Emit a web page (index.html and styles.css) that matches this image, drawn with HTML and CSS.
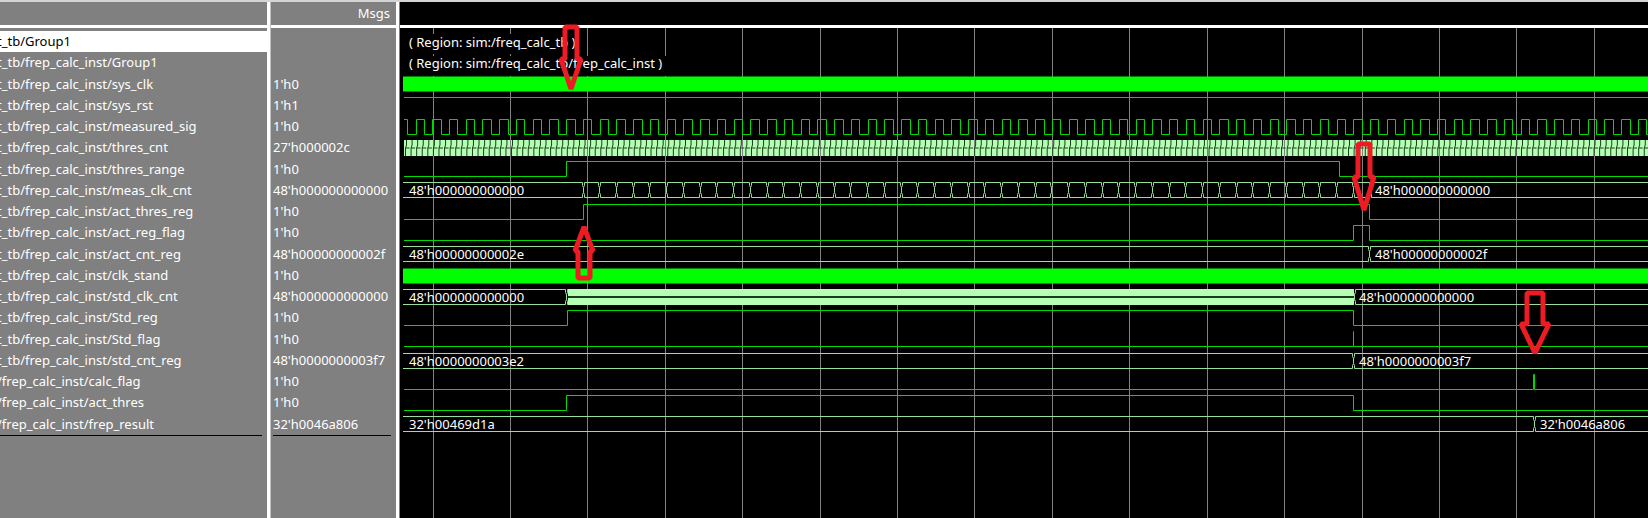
FILE: index.html
```html
<!DOCTYPE html>
<html lang="en">
<head>
    <meta charset="UTF-8">
    <title>Wave</title>
    <link rel="stylesheet" href="styles.css">
</head>
<body>
    <div class="wave-window">
        <div class="pane names">
            <div class="pane-head"></div>
            <ul class="rows">
                <li class="selected">t_tb/Group1</li>
                <li>t_tb/frep_calc_inst/Group1</li>
                <li>t_tb/frep_calc_inst/sys_clk</li>
                <li>t_tb/frep_calc_inst/sys_rst</li>
                <li>t_tb/frep_calc_inst/measured_sig</li>
                <li>t_tb/frep_calc_inst/thres_cnt</li>
                <li>t_tb/frep_calc_inst/thres_range</li>
                <li>t_tb/frep_calc_inst/meas_clk_cnt</li>
                <li>t_tb/frep_calc_inst/act_thres_reg</li>
                <li>t_tb/frep_calc_inst/act_reg_flag</li>
                <li>t_tb/frep_calc_inst/act_cnt_reg</li>
                <li>t_tb/frep_calc_inst/clk_stand</li>
                <li>t_tb/frep_calc_inst/std_clk_cnt</li>
                <li>t_tb/frep_calc_inst/Std_reg</li>
                <li>t_tb/frep_calc_inst/Std_flag</li>
                <li>t_tb/frep_calc_inst/std_cnt_reg</li>
                <li>/frep_calc_inst/calc_flag</li>
                <li>/frep_calc_inst/act_thres</li>
                <li>/frep_calc_inst/frep_result</li>
            </ul>
        </div>
        <div class="pane values">
            <div class="pane-head">Msgs</div>
            <ul class="rows">
                <li></li>
                <li></li>
                <li>1'h0</li>
                <li>1'h1</li>
                <li>1'h0</li>
                <li>27'h000002c</li>
                <li>1'h0</li>
                <li>48'h000000000000</li>
                <li>1'h0</li>
                <li>1'h0</li>
                <li>48'h00000000002f</li>
                <li>1'h0</li>
                <li>48'h000000000000</li>
                <li>1'h0</li>
                <li>1'h0</li>
                <li>48'h0000000003f7</li>
                <li>1'h0</li>
                <li>1'h0</li>
                <li>32'h0046a806</li>
            </ul>
        </div>
        <div class="pane waves">
            <div class="pane-head"></div>
            <svg class="plot" id="plot"></svg>
        </div>
    </div>
    <script src="wave.js"></script>
</body>
</html>
```

FILE: styles.css
```css
body {
    margin: 0;
    background-color: #000;
    font-family: "Noto Sans", "DejaVu Sans Condensed", sans-serif;
    font-size: 13px;
    color: #fff;
}
.wave-window {
    display: flex;
    box-sizing: border-box;
    height: 100vh;
    border-top: 2px solid #d4d4d4;
    overflow: hidden;
}
.pane {
    position: relative;
    box-sizing: border-box;
    flex: none;
    background-color: #808080;
    overflow: hidden;
}
.names {
    width: 270px;
    border-right: 3px solid #fff;
}
.values {
    width: 129px;
    border-left: 1px solid #c0c0c0;
    border-right: 3px solid #fff;
}
.waves {
    flex: 1;
    background-color: #000;
    border-left: 1px solid #808080;
}
.pane-head {
    box-sizing: border-box;
    height: 26px;
    padding-right: 6px;
    border-bottom: 3px solid #fff;
    line-height: 23px;
    text-align: right;
}
.rows {
    display: grid;
    grid-template-rows: repeat(19, 1fr);
    height: 404px;
    margin: 3px 5px 0 0;
    padding: 0;
    border-bottom: 1px solid #000;
    list-style: none;
}
.rows li {
    line-height: 20px;
    min-height: 0;
    white-space: pre;
}
.names li {
    text-indent: -3px;
}
.names .selected {
    margin-right: -5px;
    background-color: #fff;
    color: #000;
}
.values .rows {
    margin-left: 2px;
}
.plot {
    position: absolute;
    top: 0;
    left: 0;
    width: 100%;
    height: 100%;
}
.plot text {
    fill: #fff;
}
.label-back {
    fill: #000;
}
.grid {
    fill: none;
    stroke: #808080;
}
.logic {
    fill: none;
    stroke: #00d800;
}
.bus {
    fill: none;
    stroke: #98e098;
}
.solid {
    fill: #0f0;
}
.dense {
    fill: #b4ffb4;
}
.notch {
    fill: none;
    stroke: #1c3c1c;
}
.gap {
    fill: #1c3c1c;
}
.arrow {
    fill: none;
    stroke: #ed1c24;
    stroke-width: 5;
    stroke-linejoin: bevel;
}
```

FILE: wave.js
```js
const plot = document.getElementById('plot');
const rowHeight = 404 / 19;
const start = 3;
const end = 4000;

function add(tag, attrs, text) {
    const el = document.createElementNS('http://www.w3.org/2000/svg', tag);
    for (const key in attrs) el.setAttribute(key, attrs[key]);
    if (text) el.textContent = text;
    plot.appendChild(el);
}

function mid(row) {
    return Math.round(29 + (row + 0.5) * rowHeight);
}
function high(row) {
    return mid(row) - 7.5;
}
function low(row) {
    return mid(row) + 7.5;
}

function label(row, x, text) {
    add('text', { x: x, y: mid(row) + 5 }, text);
}

// one-bit signal, toggles at every x of edges
function logic(row, level, edges) {
    let d = `M${start + 1} ${level ? high(row) : low(row)}`;
    edges.forEach(x => {
        level = !level;
        d += `H${x}V${level ? high(row) : low(row)}`;
    });
    add('path', { class: 'logic', d: d + `H${end}` });
}

// vector signal, changes value at every x of edges
function bus(row, edges) {
    const h = high(row);
    const l = low(row);
    let d = '';
    let from = start;
    edges.forEach(x => {
        d += `M${from} ${h}H${x - 1}V${h + 3}L${x} ${h + 5}V${l - 5}L${x - 1} ${l - 3}V${l}H${from}`;
        d += `M${x + 1} ${h}V${h + 3}L${x} ${h + 5}M${x} ${l - 5}L${x + 1} ${l - 3}V${l}`;
        from = x + 1;
    });
    d += `M${from} ${h}H${end}M${from} ${l}H${end}`;
    add('path', { class: 'bus', d: d });
}

function block(row, cls, from, to, height) {
    add('rect', { class: cls, x: from, y: mid(row) - height / 2, width: to - from, height: height });
}

function gridLines() {
    let d = '';
    for (let x = 33; x < end; x += 77.42) d += `M${Math.floor(x) + 0.5} 26V3000`;
    add('path', { class: 'grid', d: d });
}

function arrow(x, top, shoulder, tip, shaft, wing) {
    add('path', {
        class: 'arrow',
        d: `M${x - shaft} ${top}H${x + shaft}V${shoulder}H${x + wing}L${x} ${tip}L${x - wing} ${shoulder}H${x - shaft}Z`
    });
}

// thres_cnt changes too fast to show its values
block(5, 'dense', start + 1, end, 16);
gridLines();
let notches = '';
for (let x = 5.5; x < end; x += 5.58) {
    const m = mid(5);
    notches += `M${x + 1} ${m - 8}V${m - 3}L${x} ${m}V${m + 8}M${x} ${m}H${x + 4}`;
}
add('path', { class: 'notch', d: notches });

// region labels
add('rect', { class: 'label-back', x: 7, y: 32, width: 175, height: 20 });
add('rect', { class: 'label-back', x: 7, y: 54, width: 262, height: 20 });
label(0, 9, '( Region: sim:/freq_calc_tb )');
label(1, 9, '( Region: sim:/freq_calc_tb/frep_calc_inst )');

block(2, 'solid', start, end, 15);
logic(3, true, []);

const clock = [7.5];
for (let x = 16; x < end; x += 16.746) {
    clock.push(Math.floor(x) + 0.5, Math.floor(x + 8.4) + 0.5);
}
logic(4, true, clock);

logic(6, false, [166.5, 939.5]);

const counts = [];
for (let i = 0; i < 48; i++) counts.push(Math.floor(183 + i * 16.746) + 0.5);
bus(7, counts);
label(7, 9, "48'h000000000000");
label(7, 975, "48'h000000000000");

logic(8, false, [183.5, 969.5]);
logic(9, false, [953.5, 969.5]);

bus(10, [969.5]);
label(10, 9, "48'h00000000002e");
label(10, 975, "48'h00000000002f");

block(11, 'solid', start, end, 15);

bus(12, [166.5, 954.5]);
block(12, 'dense', 168, 954, 16);
block(12, 'gap', 168, 954, 2);
label(12, 9, "48'h000000000000");
label(12, 959, "48'h000000000000");

logic(13, false, [167.5, 953.5]);
logic(14, false, [953.5, 953.5]);

bus(15, [953.5]);
label(15, 9, "48'h0000000003e2");
label(15, 959, "48'h0000000003f7");

logic(16, false, [1133.5, 1134.5]);
logic(17, false, [166.5, 953.5]);

bus(18, [1134.5]);
label(18, 9, "32'h00469d1a");
label(18, 1140, "32'h0046a806");

// hand-placed markers
arrow(171, 25, 57, 87, 6, 10);
arrow(184, 276, 249, 225, 6, 9);
arrow(964, 142, 175, 208, 6, 10);
arrow(1135, 291, 322, 351, 8, 14);
```
